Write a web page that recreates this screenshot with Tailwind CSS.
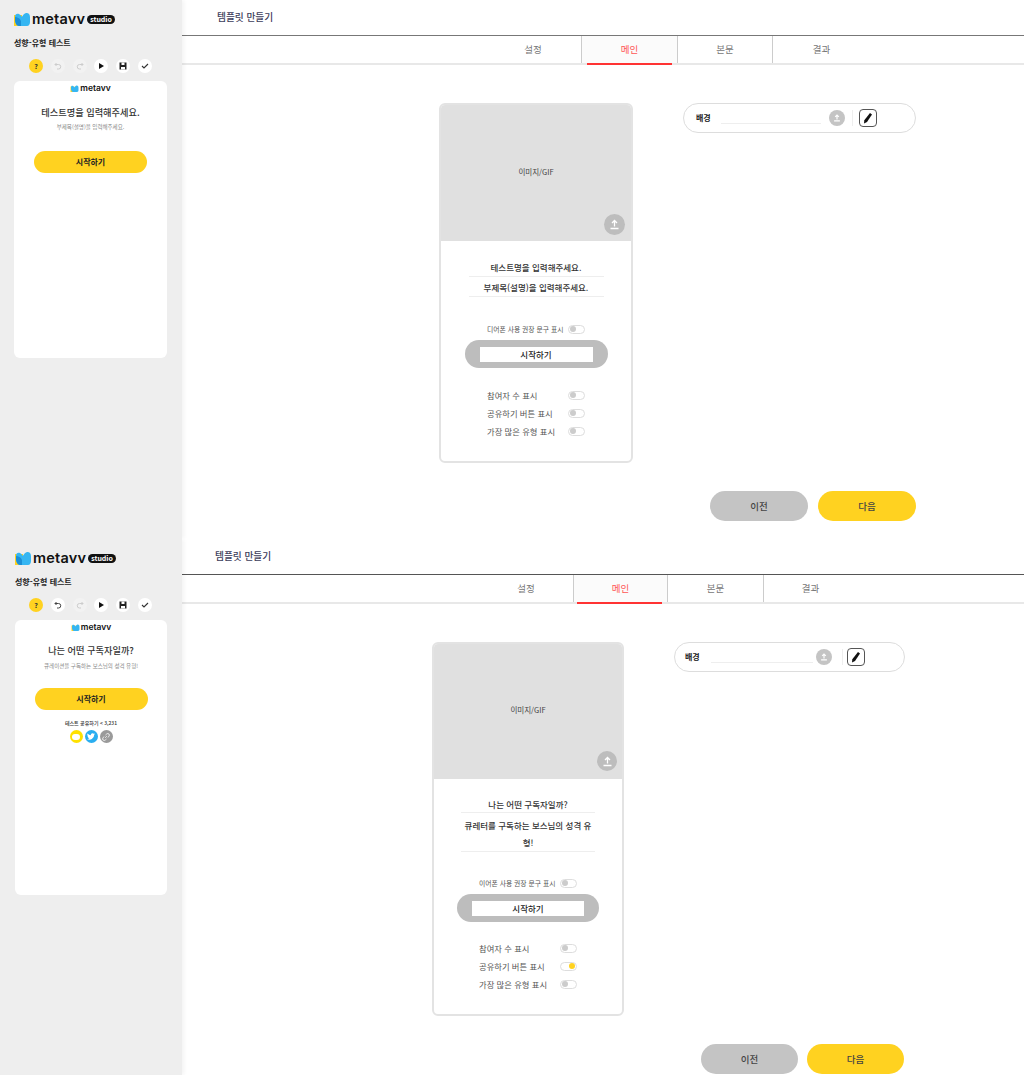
<!DOCTYPE html>
<html lang="ko">
<head>
    <meta charset="UTF-8">
    <meta name="viewport" content="width=device-width, initial-scale=1.0">
    <title>metavv studio</title>
    <script src="https://cdn.jsdelivr.net/npm/@tailwindcss/browser@4"></script>
</head>
<body class="bg-white text-[#333] font-['Noto_Sans_CJK_KR','Noto_Sans',sans-serif]">

    <!-- First capture: empty template -->
    <section class="flex h-[539px] overflow-hidden">
        <aside class="w-[182px] shrink-0 bg-[#eeeeee] pl-[14px] pr-[15px] pt-[10px] shadow-[2px_0_4px_rgba(0,0,0,0.05)] z-10">
            <div class="flex items-center h-[18px]">
                <svg width="16" height="14" viewBox="0 0 16 14"><path d="M0 3h8v11H0z" fill="#ffd220"/><path d="M1 5c0-3 2-4 4-3 2 1 3 3 3 3s1-3 4-4c2-.5 4 1 4 4v5c0 2-1 4-3 4H5C3 14 1 11 1 8z" fill="#35b6f2"/><path d="M1 5c2 0 5 1 6 4v5H5C3 14 1 11 1 8z" fill="#1c8fd6"/></svg>
                <span class="ml-[2px] font-['Inter',sans-serif] font-semibold text-[14.5px] leading-none tracking-[0.2px] text-[#111]">metavv</span>
                <span class="ml-[2px] bg-[#111] text-white rounded-full text-[7px] font-bold leading-[9px] px-[3px]">studio</span>
            </div>
            <h2 class="mt-[8px] text-[8px] leading-[14px] font-bold text-[#222]">성향-유형 테스트</h2>
            <div class="mt-[9px] pl-[15px] flex gap-[7.8px]">
                <span class="w-[14px] h-[14px] rounded-full bg-[#ffd220] flex items-center justify-center text-[7px] font-bold text-[#333]">?</span>
                <span class="w-[14px] h-[14px] rounded-full bg-[#f2f2f2] flex items-center justify-center"><svg width="8" height="8" viewBox="0 0 8 8" fill="none" stroke="#ccc" stroke-width="1"><path d="M2.500 1 1 2.500 2.500 4M1 2.500h3.500a2 2 0 0 1 0 4.500H3"/></svg></span>
                <span class="w-[14px] h-[14px] rounded-full bg-[#f2f2f2] flex items-center justify-center"><svg width="8" height="8" viewBox="0 0 8 8" fill="none" stroke="#ccc" stroke-width="1"><path d="M5.500 1 7 2.500 5.500 4M7 2.500H3.500a2 2 0 0 0 0 4.500H5"/></svg></span>
                <span class="w-[14px] h-[14px] rounded-full bg-white flex items-center justify-center"><svg width="8" height="8" viewBox="0 0 8 8"><path d="M2 1l5 3-5 3z" fill="#111"/></svg></span>
                <span class="w-[14px] h-[14px] rounded-full bg-white flex items-center justify-center"><svg width="8" height="8" viewBox="0 0 8 8"><path d="M.5.5h7v7h-7z" fill="#222"/><path d="M2.500.5h3v2.500h-3zM2 5h4v2.500H2z" fill="#fff"/></svg></span>
                <span class="w-[14px] h-[14px] rounded-full bg-white flex items-center justify-center"><svg width="8" height="8" viewBox="0 0 8 8" fill="none" stroke="#333" stroke-width="1.100"><path d="M1 4l2 2 4-4"/></svg></span>
            </div>
            <div class="mt-[8px] h-[277px] bg-white rounded-[6px] flex flex-col items-center pt-[3px]">
                <div class="flex items-center h-[9px]">
                    <svg width="9" height="7" viewBox="0 0 16 14"><path d="M0 3h8v11H0z" fill="#ffd220"/><path d="M1 5c0-3 2-4 4-3 2 1 3 3 3 3s1-3 4-4c2-.5 4 1 4 4v5c0 2-1 4-3 4H5C3 14 1 11 1 8z" fill="#35b6f2"/></svg>
                    <span class="ml-[1px] font-['Inter',sans-serif] font-semibold text-[8.500px] leading-none text-[#111]">metavv</span>
                </div>
                <p class="mt-[12px] text-[9.200px] leading-[14px] font-medium text-[#333]">테스트명을 입력해주세요.</p>
                <p class="mt-[4px] text-[5.500px] leading-[8px] text-[#888]">부제목(설명)을 입력해주세요.</p>
                <div class="mt-[20px] w-[113px] h-[22px] rounded-full bg-[#ffd220] flex items-center justify-center text-[8px] font-bold text-[#222]">시작하기</div>
            </div>
        </aside>

        <main class="flex-1 min-w-0">
            <div class="h-[36px] pl-[35px] pt-[9px] border-b border-[#777] text-[9.700px] leading-[16px] font-medium text-[#3c3c5a]">템플릿 만들기</div>
            <nav class="h-[29px] pl-[303px] flex border-b-2 border-[#e8e8e8] text-[9.500px] text-[#777]">
                <div class="w-[96px] pt-[6px] text-center">설정</div>
                <div class="w-[96px] pt-[6px] text-center border-l border-[#ccc] bg-[#fbfbfb] relative text-[#f55]">메인<span class="absolute left-[5px] right-[5px] -bottom-[2px] h-[2px] bg-[#f33]"></span></div>
                <div class="w-[95px] pt-[6px] text-center border-l border-[#ccc]">본문</div>
                <div class="w-[98px] pt-[6px] text-center border-l border-[#ccc]">결과</div>
            </nav>
            <div class="pl-[257px] pt-[38px] flex items-start">
                <div class="w-[194px] h-[360px] border-2 border-[#e3e3e3] rounded-[6px] overflow-hidden flex flex-col">
                    <div class="h-[136px] pb-[2px] bg-[#e0e0e0] relative flex items-center justify-center text-[7.500px] text-[#444]">이미지/GIF
                        <span class="absolute right-[6px] bottom-[6px] w-[21px] h-[21px] rounded-full bg-[#bdbdbd] flex items-center justify-center"><svg width="11" height="11" viewBox="0 0 11 11" fill="none" stroke="#fff" stroke-width="1.300"><path d="M5.500 7.500V1.500M3 4l2.500-2.500L8 4M1.500 9.500h8"/></svg></span>
                    </div>
                    <div class="w-[135px] mx-auto mt-[20px] h-[16px] border-b border-[#eee] text-center text-[8.500px] leading-[12px] font-medium">테스트명을 입력해주세요.</div>
                    <div class="w-[135px] mx-auto mt-[4px] h-[16px] border-b border-[#eee] text-center text-[8.500px] leading-[12px] font-medium">부제목(설명)을 입력해주세요.</div>
                    <div class="mt-[26px] pl-[46px] flex items-center h-[12px] text-[6.800px] text-[#555]"><span class="w-[81px]">디어폰 사용 권장 문구 표시</span><span class="w-[17px] h-[9px] rounded-full border border-[#ddd] bg-white flex items-center pl-[1px]"><span class="w-[6px] h-[6px] rounded-full bg-[#ccc]"></span></span></div>
                    <div class="mt-[5px] mx-auto w-[143px] h-[28px] rounded-full bg-[#bdbdbd] flex items-center justify-center"><span class="w-[113px] h-[15px] bg-white text-center text-[8.500px] leading-[15px] font-medium text-[#222]">시작하기</span></div>
                    <div class="mt-[21px] pl-[46px] flex items-center h-[12px] text-[8.300px] text-[#555]"><span class="w-[81px]">참여자 수 표시</span><span class="w-[17px] h-[9px] rounded-full border border-[#ddd] bg-white flex items-center pl-[1px]"><span class="w-[6px] h-[6px] rounded-full bg-[#ccc]"></span></span></div>
                    <div class="mt-[6px] pl-[46px] flex items-center h-[12px] text-[8.300px] text-[#555]"><span class="w-[81px]">공유하기 버튼 표시</span><span class="w-[17px] h-[9px] rounded-full border border-[#ddd] bg-white flex items-center pl-[1px]"><span class="w-[6px] h-[6px] rounded-full bg-[#ccc]"></span></span></div>
                    <div class="mt-[6px] pl-[46px] flex items-center h-[12px] text-[8.300px] text-[#555]"><span class="w-[81px]">가장 많은 유형 표시</span><span class="w-[17px] h-[9px] rounded-full border border-[#ddd] bg-white flex items-center pl-[1px]"><span class="w-[6px] h-[6px] rounded-full bg-[#ccc]"></span></span></div>
                </div>
                <div class="ml-[50px] w-[233px] h-[30px] rounded-full border border-[#ddd] flex items-center pl-[12px]">
                    <span class="w-[25px] text-[8px] font-bold text-[#222]">배경</span>
                    <span class="w-[100px] h-[12px] border-b border-[#eee]"></span>
                    <span class="ml-[8px] w-[16px] h-[16px] rounded-full bg-[#c4c4c4] flex items-center justify-center"><svg width="8" height="8" viewBox="0 0 11 11" fill="none" stroke="#fff" stroke-width="1.600"><path d="M5.500 7.500V1.500M3 4l2.500-2.500L8 4M1.500 9.500h8"/></svg></span>
                    <span class="ml-[7px] h-[16px] border-l border-[#eee]"></span>
                    <span class="ml-[6px] w-[18px] h-[18px] rounded-[4px] border border-[#555] flex items-center justify-center"><svg width="10" height="12" viewBox="0 0 10 12"><path d="M7 1l2 1.500-5 7.500-3 1.500.3-3.300z" fill="#111"/></svg></span>
                </div>
            </div>
            <div class="mt-[28px] pl-[528px] flex gap-[10px]">
                <div class="w-[98px] h-[30px] rounded-full bg-[#c4c4c4] flex items-center justify-center text-[9.500px] font-medium text-[#444]">이전</div>
                <div class="w-[98px] h-[30px] rounded-full bg-[#ffd220] flex items-center justify-center text-[9.500px] font-medium text-[#444]">다음</div>
            </div>
        </main>
    </section>

    <!-- Second capture: filled template -->
    <section class="flex h-[536px] overflow-hidden">
        <aside class="w-[182px] shrink-0 bg-[#eeeeee] pl-[15px] pr-[15px] pt-[10px] shadow-[2px_0_4px_rgba(0,0,0,0.05)] z-10">
            <div class="flex items-center h-[18px]">
                <svg width="16" height="14" viewBox="0 0 16 14"><path d="M0 3h8v11H0z" fill="#ffd220"/><path d="M1 5c0-3 2-4 4-3 2 1 3 3 3 3s1-3 4-4c2-.5 4 1 4 4v5c0 2-1 4-3 4H5C3 14 1 11 1 8z" fill="#35b6f2"/><path d="M1 5c2 0 5 1 6 4v5H5C3 14 1 11 1 8z" fill="#1c8fd6"/></svg>
                <span class="ml-[2px] font-['Inter',sans-serif] font-semibold text-[14.5px] leading-none tracking-[0.2px] text-[#111]">metavv</span>
                <span class="ml-[2px] bg-[#111] text-white rounded-full text-[7px] font-bold leading-[9px] px-[3px]">studio</span>
            </div>
            <h2 class="mt-[8px] text-[8px] leading-[14px] font-bold text-[#222]">성향-유형 테스트</h2>
            <div class="mt-[9px] pl-[14px] flex gap-[7.8px]">
                <span class="w-[14px] h-[14px] rounded-full bg-[#ffd220] flex items-center justify-center text-[7px] font-bold text-[#333]">?</span>
                <span class="w-[14px] h-[14px] rounded-full bg-white flex items-center justify-center"><svg width="8" height="8" viewBox="0 0 8 8" fill="none" stroke="#444" stroke-width="1"><path d="M2.500 1 1 2.500 2.500 4M1 2.500h3.500a2 2 0 0 1 0 4.500H3"/></svg></span>
                <span class="w-[14px] h-[14px] rounded-full bg-[#f2f2f2] flex items-center justify-center"><svg width="8" height="8" viewBox="0 0 8 8" fill="none" stroke="#ccc" stroke-width="1"><path d="M5.500 1 7 2.500 5.500 4M7 2.500H3.500a2 2 0 0 0 0 4.500H5"/></svg></span>
                <span class="w-[14px] h-[14px] rounded-full bg-white flex items-center justify-center"><svg width="8" height="8" viewBox="0 0 8 8"><path d="M2 1l5 3-5 3z" fill="#111"/></svg></span>
                <span class="w-[14px] h-[14px] rounded-full bg-white flex items-center justify-center"><svg width="8" height="8" viewBox="0 0 8 8"><path d="M.5.5h7v7h-7z" fill="#222"/><path d="M2.500.5h3v2.500h-3zM2 5h4v2.500H2z" fill="#fff"/></svg></span>
                <span class="w-[14px] h-[14px] rounded-full bg-white flex items-center justify-center"><svg width="8" height="8" viewBox="0 0 8 8" fill="none" stroke="#333" stroke-width="1.100"><path d="M1 4l2 2 4-4"/></svg></span>
            </div>
            <div class="mt-[8px] h-[275px] bg-white rounded-[6px] flex flex-col items-center pt-[3px]">
                <div class="flex items-center h-[9px]">
                    <svg width="9" height="7" viewBox="0 0 16 14"><path d="M0 3h8v11H0z" fill="#ffd220"/><path d="M1 5c0-3 2-4 4-3 2 1 3 3 3 3s1-3 4-4c2-.5 4 1 4 4v5c0 2-1 4-3 4H5C3 14 1 11 1 8z" fill="#35b6f2"/></svg>
                    <span class="ml-[1px] font-['Inter',sans-serif] font-semibold text-[8.500px] leading-none text-[#111]">metavv</span>
                </div>
                <p class="mt-[11px] text-[9.200px] leading-[14px] font-medium text-[#333]">나는 어떤 구독자일까?</p>
                <p class="mt-[5px] text-[5.500px] leading-[8px] text-[#888]">큐레이션을 구독하는 보스님의 성격 유형!</p>
                <div class="mt-[18px] w-[113px] h-[22px] rounded-full bg-[#ffd220] flex items-center justify-center text-[8px] font-bold text-[#222]">시작하기</div>
                <p class="mt-[9px] text-[5px] leading-[8px] font-medium text-[#333]">테스트 공유하기 &lt; 3,231</p>
                <div class="mt-[3px] flex gap-[2px]">
                    <span class="w-[13px] h-[13px] rounded-full bg-[#ffe100] flex items-center justify-center"><span class="w-[8px] h-[6px] rounded-full bg-white"></span></span>
                    <span class="w-[13px] h-[13px] rounded-full bg-[#2aaef0] flex items-center justify-center"><svg width="8" height="7" viewBox="0 0 24 20"><path d="M24 2.400a10 10 0 0 1-2.800.8A5 5 0 0 0 23.300.5a10 10 0 0 1-3.100 1.200 4.900 4.900 0 0 0-8.400 4.500A14 14 0 0 1 1.700 1a4.900 4.900 0 0 0 1.500 6.600 5 5 0 0 1-2.200-.6c0 2.400 1.700 4.400 3.900 4.900a5 5 0 0 1-2.200.1 4.900 4.900 0 0 0 4.600 3.400A10 10 0 0 1 0 17.400 14 14 0 0 0 21.500 5c1-.7 1.900-1.600 2.500-2.600z" fill="#fff"/></svg></span>
                    <span class="w-[13px] h-[13px] rounded-full bg-[#9a9a9a] flex items-center justify-center"><svg width="8" height="8" viewBox="0 0 8 8" fill="none" stroke="#eee" stroke-width="1"><path d="M3.200 4.800 4.800 3.200M3.500 2 4.700 1a1.500 1.500 0 0 1 2.200 2.200L6 4.500M4.500 6 3.300 7A1.500 1.500 0 0 1 1.100 4.800L2 3.500"/></svg></span>
                </div>
            </div>
        </aside>

        <main class="flex-1 min-w-0">
            <div class="h-[36px] pl-[33px] pt-[9px] border-b border-[#555] text-[9.700px] leading-[16px] font-medium text-[#3c3c5a]">템플릿 만들기</div>
            <nav class="h-[29px] pl-[297px] flex border-b-2 border-[#e8e8e8] text-[9.500px] text-[#777]">
                <div class="w-[94px] pt-[6px] text-center">설정</div>
                <div class="w-[94px] pt-[6px] text-center border-l border-[#ccc] bg-[#fbfbfb] relative text-[#f55]">메인<span class="absolute left-[3px] right-[5px] -bottom-[2px] h-[2px] bg-[#f33]"></span></div>
                <div class="w-[96px] pt-[6px] text-center border-l border-[#ccc]">본문</div>
                <div class="w-[94px] pt-[6px] text-center border-l border-[#ccc]">결과</div>
            </nav>
            <div class="pl-[250px] pt-[38px] flex items-start">
                <div class="w-[192px] h-[374px] border-2 border-[#e3e3e3] rounded-[6px] overflow-hidden flex flex-col">
                    <div class="h-[135px] pb-[3px] bg-[#e0e0e0] relative flex items-center justify-center text-[7.500px] text-[#444]">이미지/GIF
                        <span class="absolute right-[5px] bottom-[8px] w-[20px] h-[20px] rounded-full bg-[#bdbdbd] flex items-center justify-center"><svg width="11" height="11" viewBox="0 0 11 11" fill="none" stroke="#fff" stroke-width="1.300"><path d="M5.500 7.500V1.500M3 4l2.500-2.500L8 4M1.500 9.500h8"/></svg></span>
                    </div>
                    <div class="w-[134px] mx-auto mt-[19px] h-[15px] border-b border-[#eee] text-center text-[8.500px] leading-[12px] font-medium">나는 어떤 구독자일까?</div>
                    <div class="w-[134px] mx-auto mt-[4px] border-b border-[#eee] text-center text-[8.500px] leading-[17px] font-medium">큐레터를 구독하는 보스님의 성격 유형!</div>
                    <div class="mt-[25px] pl-[45px] flex items-center h-[12px] text-[6.800px] text-[#555]"><span class="w-[81px]">이어폰 사용 권장 문구 표시</span><span class="w-[17px] h-[9px] rounded-full border border-[#ddd] bg-white flex items-center pl-[1px]"><span class="w-[6px] h-[6px] rounded-full bg-[#ccc]"></span></span></div>
                    <div class="mt-[5px] mx-auto w-[142px] h-[28px] rounded-full bg-[#bdbdbd] flex items-center justify-center"><span class="w-[112px] h-[15px] bg-white text-center text-[8.500px] leading-[15px] font-medium text-[#222]">시작하기</span></div>
                    <div class="mt-[20px] pl-[45px] flex items-center h-[12px] text-[8.300px] text-[#555]"><span class="w-[81px]">참여자 수 표시</span><span class="w-[17px] h-[9px] rounded-full border border-[#ddd] bg-white flex items-center pl-[1px]"><span class="w-[6px] h-[6px] rounded-full bg-[#ccc]"></span></span></div>
                    <div class="mt-[6px] pl-[45px] flex items-center h-[12px] text-[8.300px] text-[#555]"><span class="w-[81px]">공유하기 버튼 표시</span><span class="w-[17px] h-[9px] rounded-full border border-[#ddd] bg-white flex items-center justify-end pr-[1px]"><span class="w-[6px] h-[6px] rounded-full bg-[#ffd220]"></span></span></div>
                    <div class="mt-[6px] pl-[45px] flex items-center h-[12px] text-[8.300px] text-[#555]"><span class="w-[81px]">가장 많은 유형 표시</span><span class="w-[17px] h-[9px] rounded-full border border-[#ddd] bg-white flex items-center pl-[1px]"><span class="w-[6px] h-[6px] rounded-full bg-[#ccc]"></span></span></div>
                </div>
                <div class="ml-[50px] w-[231px] h-[30px] rounded-full border border-[#ddd] flex items-center pl-[10px]">
                    <span class="w-[26px] text-[8px] font-bold text-[#222]">배경</span>
                    <span class="w-[102px] h-[12px] border-b border-[#eee]"></span>
                    <span class="ml-[3px] w-[16px] h-[16px] rounded-full bg-[#c4c4c4] flex items-center justify-center"><svg width="8" height="8" viewBox="0 0 11 11" fill="none" stroke="#fff" stroke-width="1.600"><path d="M5.500 7.500V1.500M3 4l2.500-2.500L8 4M1.500 9.500h8"/></svg></span>
                    <span class="ml-[10px] h-[16px] border-l border-[#eee]"></span>
                    <span class="ml-[4px] w-[18px] h-[18px] rounded-[4px] border border-[#555] flex items-center justify-center"><svg width="10" height="12" viewBox="0 0 10 12"><path d="M7 1l2 1.500-5 7.500-3 1.500.3-3.300z" fill="#111"/></svg></span>
                </div>
            </div>
            <div class="mt-[28px] pl-[519px] flex gap-[9px]">
                <div class="w-[97px] h-[30px] rounded-full bg-[#c4c4c4] flex items-center justify-center text-[9.500px] font-medium text-[#444]">이전</div>
                <div class="w-[97px] h-[30px] rounded-full bg-[#ffd220] flex items-center justify-center text-[9.500px] font-medium text-[#444]">다음</div>
            </div>
        </main>
    </section>
</body>
</html>
